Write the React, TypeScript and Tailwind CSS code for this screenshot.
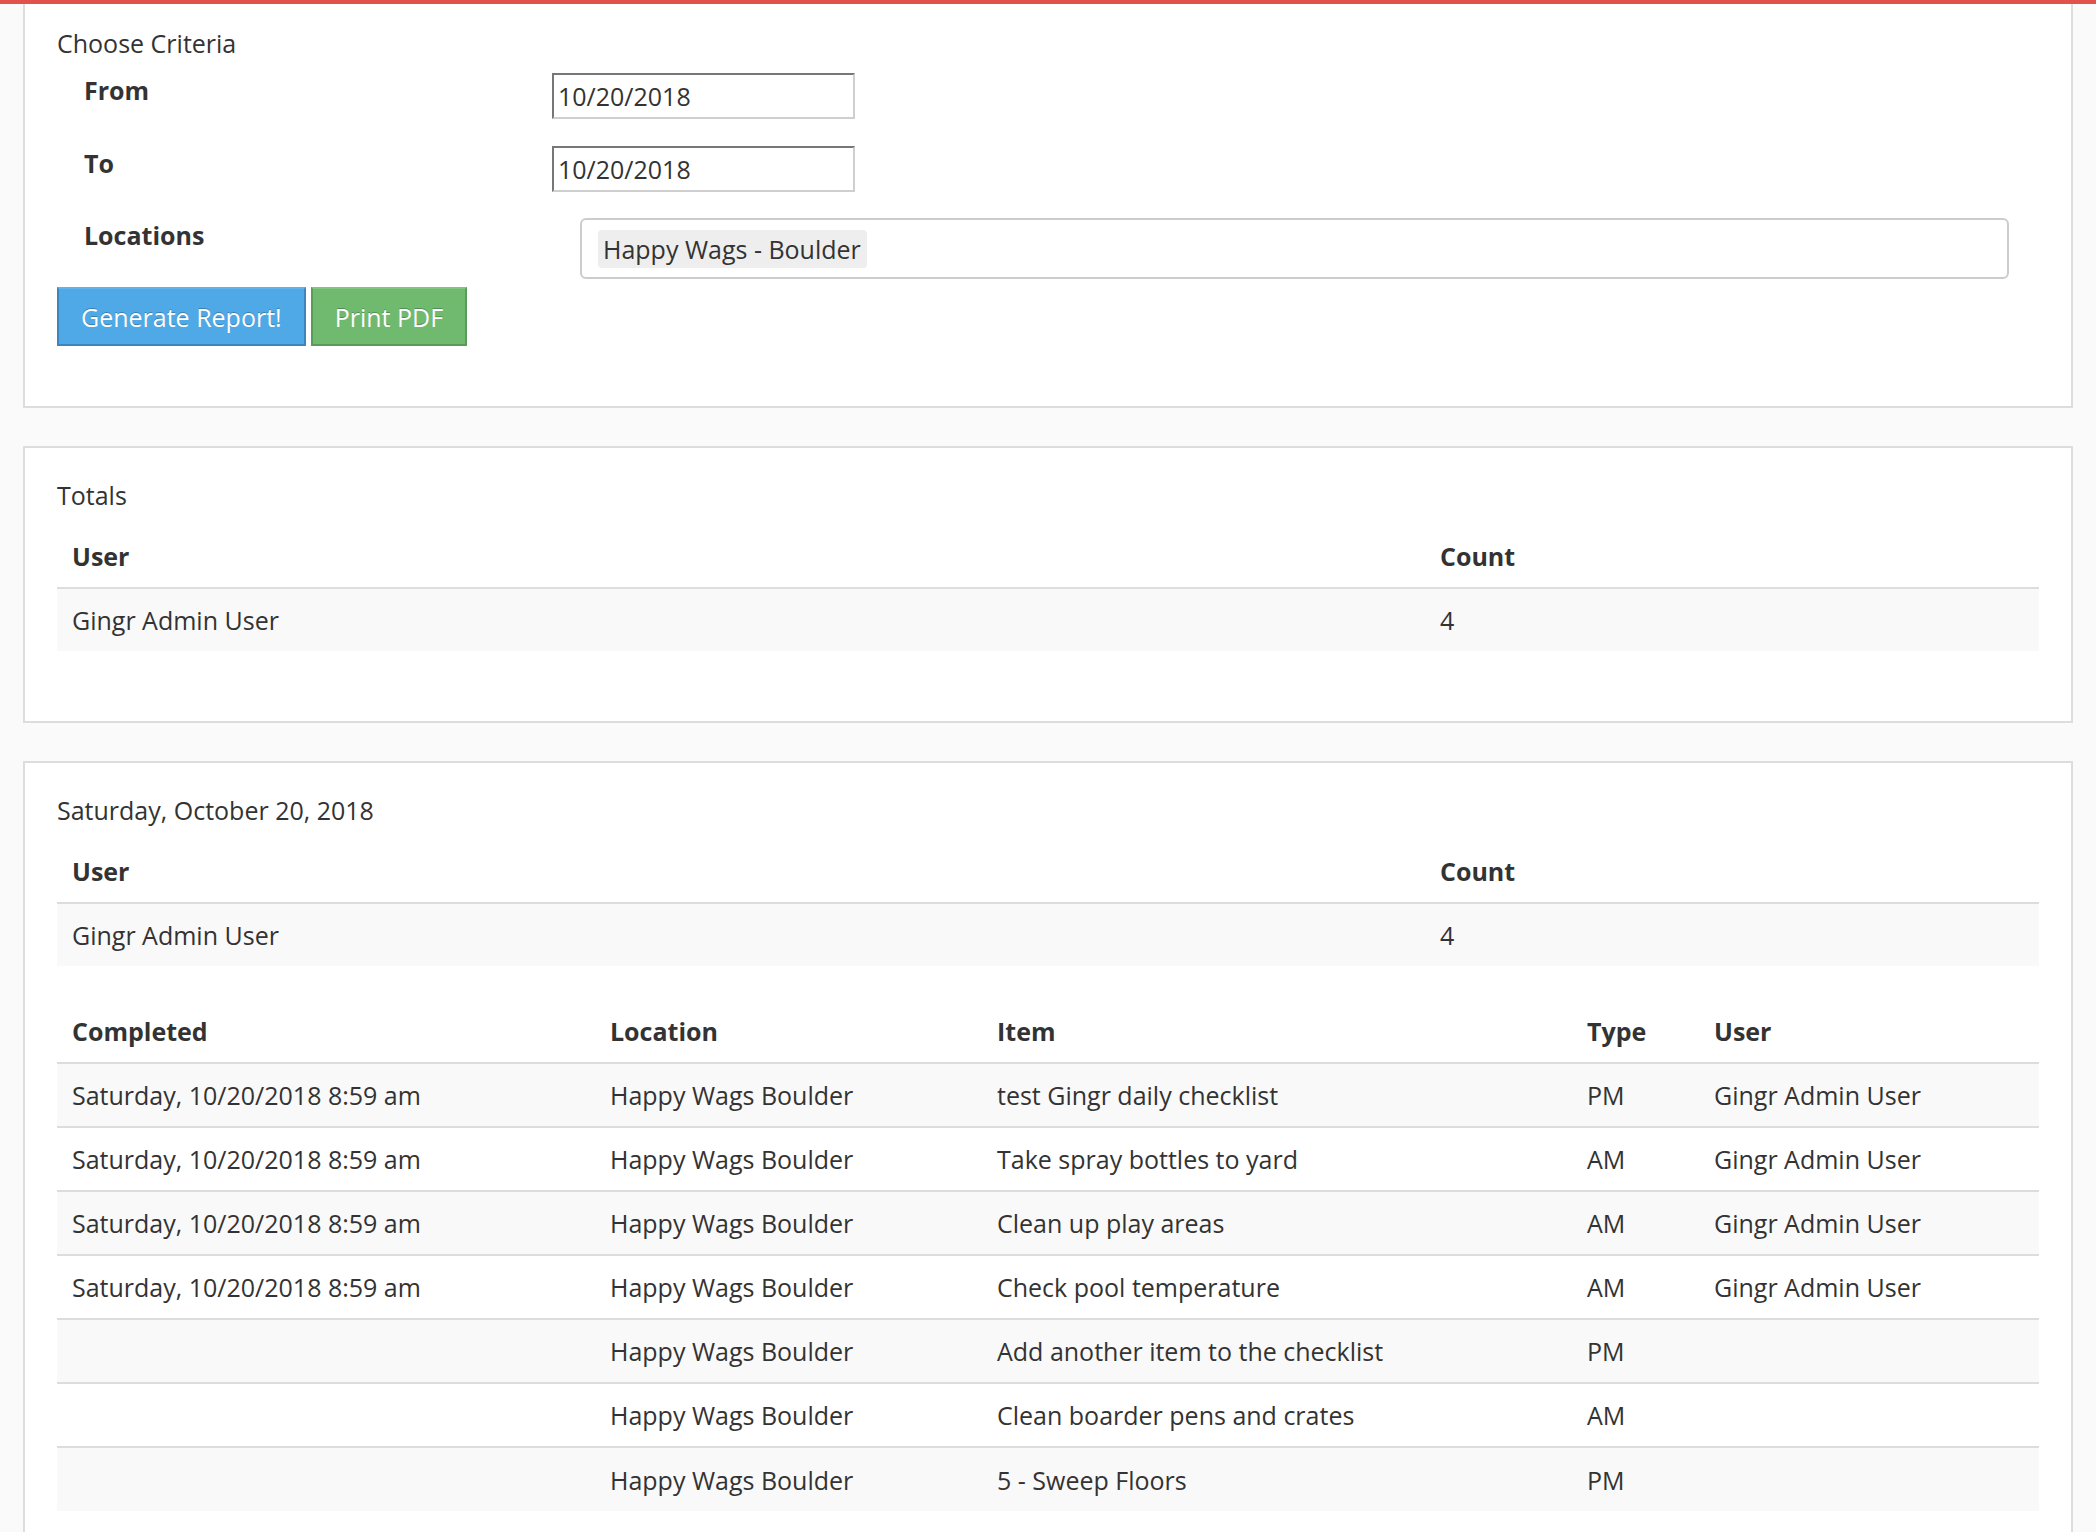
import React from "react";

const rows = [
  ["Saturday, 10/20/2018 8:59 am", "Happy Wags Boulder", "test Gingr daily checklist", "PM", "Gingr Admin User"],
  ["Saturday, 10/20/2018 8:59 am", "Happy Wags Boulder", "Take spray bottles to yard", "AM", "Gingr Admin User"],
  ["Saturday, 10/20/2018 8:59 am", "Happy Wags Boulder", "Clean up play areas", "AM", "Gingr Admin User"],
  ["Saturday, 10/20/2018 8:59 am", "Happy Wags Boulder", "Check pool temperature", "AM", "Gingr Admin User"],
  ["", "Happy Wags Boulder", "Add another item to the checklist", "PM", ""],
  ["", "Happy Wags Boulder", "Clean boarder pens and crates", "AM", ""],
  ["", "Happy Wags Boulder", "5 - Sweep Floors", "PM", ""],
];

function UserCountTable() {
  return (
    <table className="w-full table-fixed border-collapse mt-[13px] mb-[34px]">
      <colgroup>
        <col className="w-[1368px]" />
        <col />
      </colgroup>
      <thead>
        <tr>
          <th className="text-left font-bold px-[15px] py-[14px] border-b-2 border-[#ddd]">User</th>
          <th className="text-left font-bold px-[15px] py-[14px] border-b-2 border-[#ddd]">Count</th>
        </tr>
      </thead>
      <tbody>
        <tr className="bg-[#f9f9f9]">
          <td className="px-[15px] py-[14px] border-t-2 border-[#ddd]">Gingr Admin User</td>
          <td className="px-[15px] py-[14px] border-t-2 border-[#ddd]">4</td>
        </tr>
      </tbody>
    </table>
  );
}

function DateInput() {
  return (
    <input
      readOnly
      defaultValue="10/20/2018"
      className="w-[303px] h-[46px] bg-white border-2 border-t-[#777] border-l-[#777] border-b-[#cfcfcf] border-r-[#cfcfcf] pl-[4px] text-[25px] leading-[34px] text-[#333] outline-none"
    />
  );
}

export default function App() {
  return (
    <div className="min-h-screen bg-[#fafafa] font-['Open_Sans',sans-serif] text-[25px] leading-[34px] text-[#333]">
      <div className="h-[4px] bg-[#e3524a]" />
      <div className="mx-[23px]">
        <section className="bg-white border-2 border-t-0 border-[#ddd] px-[32px] pt-[22px] pb-[60px]">
          <div>Choose Criteria</div>
          <div className="flex items-start mt-[13px]">
            <div className="w-[495px] pl-[27px] font-bold">From</div>
            <DateInput />
          </div>
          <div className="flex items-start mt-[27px]">
            <div className="w-[495px] pl-[27px] font-bold">To</div>
            <DateInput />
          </div>
          <div className="flex items-start mt-[26px]">
            <div className="w-[523px] pl-[27px] font-bold">Locations</div>
            <div className="w-[1429px] h-[61px] border-2 border-[#ccc] rounded-[6px] flex items-center px-[16px] bg-white">
              <span className="bg-[#eee] rounded-[4px] pl-[5px] pr-[6px] leading-[38px]">Happy Wags - Boulder</span>
            </div>
          </div>
          <div className="flex gap-[5px] mt-[8px]">
            <button className="h-[59px] flex items-center px-[22px] bg-[#4ea9e6] border-2 border-[#3d86bd] border-t-[#5fb4ec] text-white [text-shadow:0_-1px_0_rgba(0,0,0,0.25)]">
              Generate Report!
            </button>
            <button className="h-[59px] flex items-center px-[22px] bg-[#6fba6f] border-2 border-[#5a9a5a] border-t-[#80c680] text-white [text-shadow:0_-1px_0_rgba(0,0,0,0.25)]">
              Print PDF
            </button>
          </div>
        </section>

        <section className="mt-[38px] bg-white border-2 border-[#ddd] px-[32px] pt-[30px] pb-[36px]">
          <div>Totals</div>
          <UserCountTable />
        </section>

        <section className="mt-[38px] bg-white border-2 border-[#ddd] px-[32px] pt-[30px] pb-[34px]">
          <div>Saturday, October 20, 2018</div>
          <UserCountTable />
          <table className="w-full table-fixed border-collapse mt-[3px]">
            <colgroup>
              <col className="w-[538px]" />
              <col className="w-[387px]" />
              <col className="w-[590px]" />
              <col className="w-[127px]" />
              <col />
            </colgroup>
            <thead>
              <tr>
                {["Completed", "Location", "Item", "Type", "User"].map((h) => (
                  <th key={h} className="text-left font-bold px-[15px] py-[14px] border-b-2 border-[#ddd]">
                    {h}
                  </th>
                ))}
              </tr>
            </thead>
            <tbody>
              {rows.map((r, i) => (
                <tr key={i} className={i % 2 === 0 ? "bg-[#f9f9f9]" : "bg-white"}>
                  {r.map((c, j) => (
                    <td key={j} className="px-[15px] py-[14px] border-t-2 border-[#ddd] whitespace-nowrap h-[64px]">
                      {c}
                    </td>
                  ))}
                </tr>
              ))}
            </tbody>
          </table>
        </section>
      </div>
    </div>
  );
}
